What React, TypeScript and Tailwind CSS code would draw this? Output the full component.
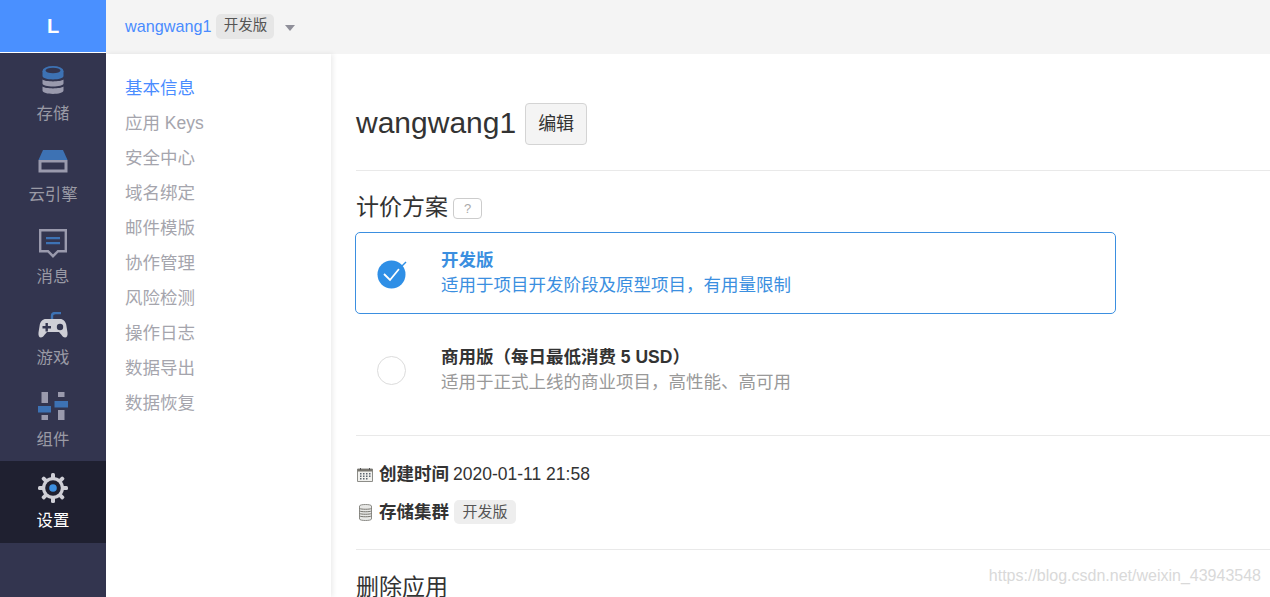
import type { ReactNode } from 'react'

const font = { fontFamily: '"Liberation Sans", "Noto Sans CJK SC", sans-serif' }

const Cylinder = () => (
  <svg width="22" height="29" viewBox="0 0 22 29">
    <path d="M.5 20.500c3 2.500 18 2.500 21 0v4c0 4.500-21 4.500-21 0z" fill="#9a9aad" />
    <path d="M.5 13.500c3 2.500 18 2.500 21 0v4c0 4-21 4-21 0z" fill="#9a9aad" />
    <ellipse cx="11" cy="5" rx="10.500" ry="5" fill="#3d72b4" />
    <path d="M.5 5v5c0 4.500 21 4.500 21 0V5z" fill="#3d72b4" />
    <ellipse cx="11" cy="4.500" rx="7.500" ry="2.800" fill="#33354f" />
  </svg>
)

const Engine = () => (
  <svg width="30" height="23" viewBox="0 0 30 23">
    <path d="M5 0h20l4.500 10H.5z" fill="#3d72b4" />
    <path d="M.5 10h29v12.500H.5z" fill="#9a9aad" />
    <path d="M3.500 12.500h23v7h-23z" fill="#33354f" />
  </svg>
)

const Message = () => (
  <svg width="28" height="29" viewBox="0 0 28 29">
    <path d="M1.200 1.200h25.600v21H19l-5 5-5-5H1.200z" fill="none" stroke="#9a9aad" strokeWidth="2.400" />
    <path d="M7 8h14v2.200H7zM7 13h14v2.200H7z" fill="#3d72b4" />
  </svg>
)

const Gamepad = () => (
  <svg width="30" height="26" viewBox="0 0 30 26">
    <path d="M14 7V4C14 2 15.500 1 17.500 1H23" fill="none" stroke="#3d72b4" strokeWidth="2.400" />
    <path d="M8 7h14c3.500 0 5.500 2.500 6.200 5.500l1.300 8c.4 3-.6 5-2.500 5-2.200 0-3.500-3-6-5.500H9C6.500 22.500 5.200 25.500 3 25.500c-1.900 0-2.900-2-2.500-5l1.300-8C2.500 9.500 4.500 7 8 7z" fill="#cfcfd6" />
    <path d="M7.500 11h2.400v3h3.100v2.400H9.900v3H7.500v-3H4.500v-2.400h3z" fill="#33354f" />
    <circle cx="22" cy="15" r="3.200" fill="#33354f" />
  </svg>
)

const Sliders = () => (
  <svg width="30" height="29" viewBox="0 0 30 29">
    <path d="M3.500 0h6.500v11H3.500zM3.500 23h6.500v5H3.500zM20 0h6.500v5H20zM20 18h6.500v10H20z" fill="#9a9aad" />
    <path d="M0 14h13v6.500H0zM16.500 9H30v6.500H16.500z" fill="#3d72b4" />
  </svg>
)

const Gear = () => (
  <svg width="30" height="30" viewBox="0 0 30 30">
    <g fill="#cfcfd6">
      <rect x="13" y="0" width="4" height="30" rx="1.500" />
      <rect x="13" y="0" width="4" height="30" rx="1.500" transform="rotate(45 15 15)" />
      <rect x="13" y="0" width="4" height="30" rx="1.500" transform="rotate(90 15 15)" />
      <rect x="13" y="0" width="4" height="30" rx="1.500" transform="rotate(135 15 15)" />
      <circle cx="15" cy="15" r="11" />
    </g>
    <circle cx="15" cy="15" r="7.800" fill="#1f2030" />
    <circle cx="15" cy="15" r="3.800" fill="#3d8fe0" />
  </svg>
)

const Calendar = () => (
  <svg width="16" height="15" viewBox="0 0 16 15" className="shrink-0">
    <path d="M.5 2h15v12.500H.5z" fill="#f1f1ee" stroke="#8d8d88" />
    <path d="M.5 2h15v2.500H.5z" fill="#77756f" />
    <path d="M3 1h1v2H3zM12 1h1v2h-1z" fill="#555" />
    <path d="M3 6h1.500v1.500H3zM6 6h1.500v1.500H6zM9 6h1.500v1.500H9zM12 6h1.500v1.500H12zM3 8.500h1.500V10H3zM6 8.500h1.500V10H6zM9 8.500h1.500V10H9zM12 8.500h1.500V10H12zM3 11h1.500v1.500H3zM6 11h1.500v1.500H6zM9 11h1.500v1.500H9z" fill="#5d6670" />
  </svg>
)

const Stack = () => (
  <svg width="13" height="17" viewBox="0 0 13 17" className="shrink-0">
    <path d="M.5 2C.5 0 12.500 0 12.500 2v13c0 2-12 2-12 0z" fill="#e8e8e6" stroke="#8d8d88" />
    <path d="M.5 4.500c2 1 10 1 12 0M.5 7c2 1 10 1 12 0M.5 9.500c2 1 10 1 12 0M.5 12c2 1 10 1 12 0" fill="none" stroke="#77756f" />
  </svg>
)

const apps: { label: string; icon: ReactNode; active?: boolean }[] = [
  { label: '存储', icon: <Cylinder /> },
  { label: '云引擎', icon: <Engine /> },
  { label: '消息', icon: <Message /> },
  { label: '游戏', icon: <Gamepad /> },
  { label: '组件', icon: <Sliders /> },
  { label: '设置', icon: <Gear />, active: true },
]

const subNav = ['基本信息', '应用 Keys', '安全中心', '域名绑定', '邮件模版', '协作管理', '风险检测', '操作日志', '数据导出', '数据恢复']

function Badge({ children, className }: { children: ReactNode; className: string }) {
  return <span className={`inline-flex items-center justify-center rounded-[5px] text-[#555] ${className}`}>{children}</span>
}

function Plan({ title, desc, selected }: { title: string; desc: string; selected?: boolean }) {
  return (
    <div className={`flex h-[82px] items-center rounded-[5px] border pl-[21px] ${selected ? 'border-[#3b8fe0]' : 'border-transparent'}`}>
      {selected ? (
        <svg width="31" height="30" viewBox="0 0 31 30" className="mt-[1px]">
          <circle cx="14.500" cy="15.500" r="14" fill="#2f8fe6" />
          <path d="M7 15l6 6 9-11" fill="none" stroke="#fff" strokeWidth="1.800" />
          <path d="M22 10l7-7" stroke="#2f8fe6" strokeWidth="1.500" />
        </svg>
      ) : (
        <div className="mr-[2px] mt-[1px] h-[29px] w-[29px] rounded-full border border-[#dcdcdc]" />
      )}
      <div className="ml-[33px]">
        <div className={`text-[17.500px] font-bold leading-[25px] ${selected ? 'text-[#3b8fe0]' : 'text-[#333]'}`}>{title}</div>
        <div className={`text-[17.500px] leading-[25px] ${selected ? 'text-[#3b8fe0]' : 'text-[#999]'}`}>{desc}</div>
      </div>
    </div>
  )
}

export default function App() {
  return (
    <div className="relative flex h-[597px] w-[1270px] overflow-hidden bg-white" style={font}>
      {/* left rail: logo + product icons */}
      <div className="w-[106px] shrink-0">
        <div className="flex h-[52px] items-center justify-center bg-[#4a90ff] text-[20px] font-bold text-white">L</div>
        <nav className="mt-[1px] h-[544px] bg-[#33354f]">
          {apps.map((a) => (
            <div key={a.label} className={`flex h-[81.600px] flex-col items-center pt-[12px] ${a.active ? 'bg-[#1f2030] text-white' : 'text-[#9a9aa5]'}`}>
              <div className="flex h-[30px] items-center justify-center">{a.icon}</div>
              <span className="mt-[7.500px] text-[16.400px] leading-[20px]">{a.label}</span>
            </div>
          ))}
        </nav>
      </div>
      <div className="flex min-w-0 flex-1 flex-col">
        <header className="flex h-[54px] shrink-0 items-center bg-[#f4f4f4] pb-[2px] pl-[19px]">
          <span className="text-[16.200px] text-[#4a8cff]">wangwang1</span>
          <Badge className="ml-[5px] h-[25px] w-[58px] bg-[#e6e6e6] text-[14.500px]">开发版</Badge>
          <span className="ml-[11px] mt-[3px] h-0 w-0 border-x-[5.500px] border-t-[6px] border-x-transparent border-t-[#8f8f99]" />
        </header>
        <div className="flex min-h-0 flex-1">
          <aside className="z-10 w-[225px] shrink-0 bg-white pl-[19px] pt-[17px] shadow-[2px_0_5px_rgba(0,0,0,0.08)]">
            {subNav.map((s, i) => (
              <div key={s} className={`h-[35px] text-[17.500px] leading-[35px] ${i === 0 ? 'text-[#4a8cff]' : 'text-[#a5a5ad]'}`}>{s}</div>
            ))}
          </aside>
          <main className="flex-1 pl-[25px]">
            <div className="flex items-center border-b border-[#e9e9e9] pb-[25px] pt-[49px]">
              <h1 className="pb-[2px] text-[30px] font-normal leading-[40px] text-[#333]">wangwang1</h1>
              <button className="ml-[9px] h-[42px] w-[62px] rounded-[4px] border border-[#d4d4d4] bg-[#f4f4f4] text-[18px] text-[#333]">编辑</button>
            </div>
            <div className="mt-[21px] flex h-[30px] items-center">
              <h2 className="text-[23px] font-normal text-[#333]">计价方案</h2>
              <span className="ml-[5px] mt-[3px] flex h-[21px] w-[29px] items-center justify-center rounded-[4px] border border-[#ccc] text-[13px] text-[#aaa]">?</span>
            </div>
            <div className="-ml-[1px] mt-[10px] w-[761px]">
              <Plan selected title="开发版" desc="适用于项目开发阶段及原型项目，有用量限制" />
              <div className="mt-[15px]">
                <Plan title="商用版（每日最低消费 5 USD）" desc="适用于正式上线的商业项目，高性能、高可用" />
              </div>
            </div>
            <div className="mt-[24px] border-t border-[#e9e9e9] pt-[25px]">
              <div className="flex h-[26px] items-center text-[17.500px] text-[#333]">
                <span className="ml-[1px] mr-[6px]"><Calendar /></span>
                <b>创建时间</b>
                <span className="ml-[4px]">2020-01-11 21:58</span>
              </div>
              <div className="mt-[12px] flex h-[26px] items-center text-[17.500px] text-[#333]">
                <span className="ml-[3px] mr-[7px]"><Stack /></span>
                <b>存储集群</b>
                <Badge className="ml-[5px] h-[24px] w-[62px] bg-[#eee] text-[15px]">开发版</Badge>
              </div>
            </div>
            <div className="mt-[24px] border-t border-[#e9e9e9] pt-[20px]">
              <h2 className="text-[23px] font-normal leading-[34px] text-[#333]">删除应用</h2>
            </div>
          </main>
        </div>
      </div>
      <span className="absolute bottom-[9px] right-[9px] text-[16px] text-[#d9d9d9]">https://blog.csdn.net/weixin_43943548</span>
    </div>
  )
}
